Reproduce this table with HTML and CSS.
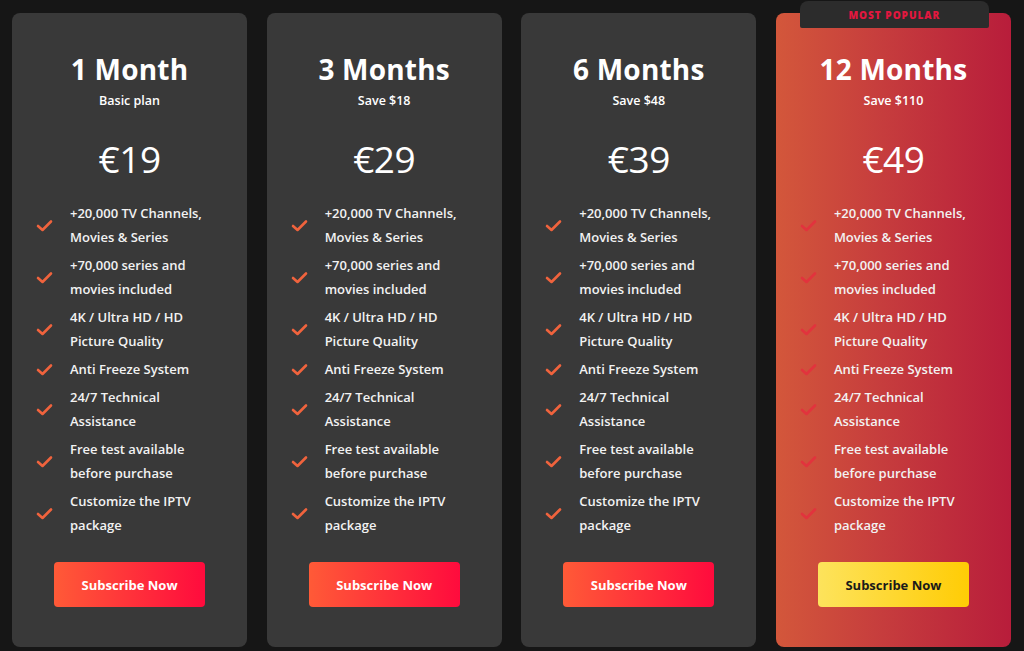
FILE: index.html
```html
<!DOCTYPE html>
<html lang="en">
<head>
<meta charset="utf-8">
<title>Pricing</title>
<link rel="stylesheet" href="styles.css">
</head>
<body>
<main class="plans">
  <section class="card">
    <h2 class="title">1 Month</h2>
    <p class="sub">Basic plan</p>
    <p class="price">€19</p>
    <ul class="features">
      <li><svg class="check" viewBox="0 0 17 13"><path d="M2 7 L6.5 11 L15 2.5"/></svg><span>+20,000 TV Channels,<br>Movies &amp; Series</span></li>
      <li><svg class="check" viewBox="0 0 17 13"><path d="M2 7 L6.5 11 L15 2.5"/></svg><span>+70,000 series and<br>movies included</span></li>
      <li><svg class="check" viewBox="0 0 17 13"><path d="M2 7 L6.5 11 L15 2.5"/></svg><span>4K / Ultra HD / HD<br>Picture Quality</span></li>
      <li><svg class="check" viewBox="0 0 17 13"><path d="M2 7 L6.5 11 L15 2.5"/></svg><span>Anti Freeze System</span></li>
      <li><svg class="check" viewBox="0 0 17 13"><path d="M2 7 L6.5 11 L15 2.5"/></svg><span>24/7 Technical<br>Assistance</span></li>
      <li><svg class="check" viewBox="0 0 17 13"><path d="M2 7 L6.5 11 L15 2.5"/></svg><span>Free test available<br>before purchase</span></li>
      <li><svg class="check" viewBox="0 0 17 13"><path d="M2 7 L6.5 11 L15 2.5"/></svg><span>Customize the IPTV<br>package</span></li>
    </ul>
    <a class="btn" href="#">Subscribe Now</a>
  </section>
  <section class="card">
    <h2 class="title">3 Months</h2>
    <p class="sub">Save $18</p>
    <p class="price">€29</p>
    <ul class="features">
      <li><svg class="check" viewBox="0 0 17 13"><path d="M2 7 L6.5 11 L15 2.5"/></svg><span>+20,000 TV Channels,<br>Movies &amp; Series</span></li>
      <li><svg class="check" viewBox="0 0 17 13"><path d="M2 7 L6.5 11 L15 2.5"/></svg><span>+70,000 series and<br>movies included</span></li>
      <li><svg class="check" viewBox="0 0 17 13"><path d="M2 7 L6.5 11 L15 2.5"/></svg><span>4K / Ultra HD / HD<br>Picture Quality</span></li>
      <li><svg class="check" viewBox="0 0 17 13"><path d="M2 7 L6.5 11 L15 2.5"/></svg><span>Anti Freeze System</span></li>
      <li><svg class="check" viewBox="0 0 17 13"><path d="M2 7 L6.5 11 L15 2.5"/></svg><span>24/7 Technical<br>Assistance</span></li>
      <li><svg class="check" viewBox="0 0 17 13"><path d="M2 7 L6.5 11 L15 2.5"/></svg><span>Free test available<br>before purchase</span></li>
      <li><svg class="check" viewBox="0 0 17 13"><path d="M2 7 L6.5 11 L15 2.5"/></svg><span>Customize the IPTV<br>package</span></li>
    </ul>
    <a class="btn" href="#">Subscribe Now</a>
  </section>
  <section class="card">
    <h2 class="title">6 Months</h2>
    <p class="sub">Save $48</p>
    <p class="price">€39</p>
    <ul class="features">
      <li><svg class="check" viewBox="0 0 17 13"><path d="M2 7 L6.5 11 L15 2.5"/></svg><span>+20,000 TV Channels,<br>Movies &amp; Series</span></li>
      <li><svg class="check" viewBox="0 0 17 13"><path d="M2 7 L6.5 11 L15 2.5"/></svg><span>+70,000 series and<br>movies included</span></li>
      <li><svg class="check" viewBox="0 0 17 13"><path d="M2 7 L6.5 11 L15 2.5"/></svg><span>4K / Ultra HD / HD<br>Picture Quality</span></li>
      <li><svg class="check" viewBox="0 0 17 13"><path d="M2 7 L6.5 11 L15 2.5"/></svg><span>Anti Freeze System</span></li>
      <li><svg class="check" viewBox="0 0 17 13"><path d="M2 7 L6.5 11 L15 2.5"/></svg><span>24/7 Technical<br>Assistance</span></li>
      <li><svg class="check" viewBox="0 0 17 13"><path d="M2 7 L6.5 11 L15 2.5"/></svg><span>Free test available<br>before purchase</span></li>
      <li><svg class="check" viewBox="0 0 17 13"><path d="M2 7 L6.5 11 L15 2.5"/></svg><span>Customize the IPTV<br>package</span></li>
    </ul>
    <a class="btn" href="#">Subscribe Now</a>
  </section>
  <section class="card card-popular">
    <div class="badge">MOST POPULAR</div>
    <h2 class="title">12 Months</h2>
    <p class="sub">Save $110</p>
    <p class="price">€49</p>
    <ul class="features">
      <li><svg class="check" viewBox="0 0 17 13"><path d="M2 7 L6.5 11 L15 2.5"/></svg><span>+20,000 TV Channels,<br>Movies &amp; Series</span></li>
      <li><svg class="check" viewBox="0 0 17 13"><path d="M2 7 L6.5 11 L15 2.5"/></svg><span>+70,000 series and<br>movies included</span></li>
      <li><svg class="check" viewBox="0 0 17 13"><path d="M2 7 L6.5 11 L15 2.5"/></svg><span>4K / Ultra HD / HD<br>Picture Quality</span></li>
      <li><svg class="check" viewBox="0 0 17 13"><path d="M2 7 L6.5 11 L15 2.5"/></svg><span>Anti Freeze System</span></li>
      <li><svg class="check" viewBox="0 0 17 13"><path d="M2 7 L6.5 11 L15 2.5"/></svg><span>24/7 Technical<br>Assistance</span></li>
      <li><svg class="check" viewBox="0 0 17 13"><path d="M2 7 L6.5 11 L15 2.5"/></svg><span>Free test available<br>before purchase</span></li>
      <li><svg class="check" viewBox="0 0 17 13"><path d="M2 7 L6.5 11 L15 2.5"/></svg><span>Customize the IPTV<br>package</span></li>
    </ul>
    <a class="btn btn-yellow" href="#">Subscribe Now</a>
  </section>
</main>
</body>
</html>
```

FILE: styles.css
```css
* { box-sizing: border-box; }
html, body { margin: 0; padding: 0; }
body {
  background: #161616;
  font-family: "Open Sans", "Liberation Sans", sans-serif;
  color: #fff;
  height: 651px;
  overflow: hidden;
}
.plans {
  display: grid;
  grid-template-columns: repeat(4, 1fr);
  column-gap: 19.5px;
  padding: 13px 13px 0 12px;
}
.card {
  position: relative;
  background: #393939;
  border-radius: 8px;
  padding: 40px 24px 40px;
  display: flex;
  flex-direction: column;
  align-items: center;
}
.card-popular {
  background: linear-gradient(90deg, #d3573b 0%, #c63d3d 45%, #b81d3b 100%);
}
.badge {
  position: absolute;
  top: -12px;
  left: 24px;
  width: 189px;
  height: 27px;
  background: #2c2c2c;
  border-radius: 8px 8px 2px 2px;
  color: #e3173f;
  font-size: 10px;
  font-weight: 800;
  letter-spacing: 1px;
  display: flex;
  align-items: center;
  justify-content: center;
  padding-top: 1px;
}
.title {
  margin: 0;
  font-size: 28px;
  line-height: 32px;
  font-weight: 700;
  letter-spacing: 0.2px;
}
.sub {
  margin: 7px 0 0;
  font-size: 12.5px;
  line-height: 18px;
  font-weight: 600;
}
.price {
  margin: 27px 0 0;
  font-size: 37px;
  line-height: 44px;
  font-weight: 500;
  letter-spacing: -0.5px;
}
.features {
  list-style: none;
  margin: 20px 0 0;
  padding: 0;
  align-self: stretch;
  display: flex;
  flex-direction: column;
  gap: 4px;
}
.features li {
  display: flex;
  align-items: center;
  gap: 17px;
  font-size: 13px;
  line-height: 24px;
  font-weight: 600;
  color: #f2f2f2;
}
.check {
  width: 17px;
  height: 13px;
  flex: none;
  fill: none;
  stroke: #f0633d;
  stroke-width: 2.6;
  stroke-linecap: round;
  stroke-linejoin: round;
}
.card-popular .check { stroke: #e2333d; }
.btn {
  margin-top: 25px;
  width: 151px;
  height: 45px;
  border-radius: 4px;
  background: linear-gradient(90deg, #ff5a37 0%, #ff0b3d 100%);
  color: #fff;
  font-size: 13px;
  font-weight: 700;
  text-decoration: none;
  display: flex;
  align-items: center;
  justify-content: center;
}
.btn-yellow {
  background: linear-gradient(90deg, #fde35c 0%, #ffcc05 100%);
  color: #1a1a1a;
}
```
